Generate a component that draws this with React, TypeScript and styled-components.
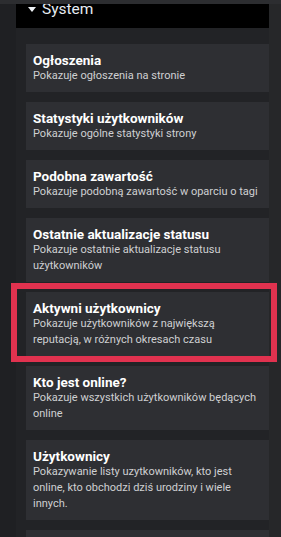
import styled, { createGlobalStyle } from "styled-components";

// TYPES
interface WidgetItem {
  title: string;
  description: string;
  highlighted?: boolean;
}

const widgets: WidgetItem[] = [
  { title: "Ogłoszenia", description: "Pokazuje ogłoszenia na stronie" },
  { title: "Statystyki użytkowników", description: "Pokazuje ogólne statystyki strony" },
  { title: "Podobna zawartość", description: "Pokazuje podobną zawartość w oparciu o tagi" },
  {
    title: "Ostatnie aktualizacje statusu",
    description: "Pokazuje ostatnie aktualizacje statusu użytkowników",
  },
  {
    title: "Aktywni użytkownicy",
    description: "Pokazuje użytkowników z największą reputacją, w różnych okresach czasu",
    highlighted: true,
  },
  { title: "Kto jest online?", description: "Pokazuje wszystkich użytkowników będących online" },
  {
    title: "Użytkownicy",
    description:
      "Pokazywanie listy uzytkowników, kto jest online, kto obchodzi dziś urodziny i wiele innych.",
  },
  { title: "Kalendarz", description: "Pokazuje nadchodzące wydarzenia" },
];

// CSS COMPONENTS
const GlobalCss = createGlobalStyle`
  html, body {
    margin: 0;
    padding: 0;
    height: 537px;
    overflow: hidden;
    background: #222326;
  }
`;

const PageCss = styled.div`
  height: 537px;
  display: flex;
  flex-direction: column;
  overflow: hidden;
  font-family: Roboto, "Liberation Sans", sans-serif;
`;

const TopStripCss = styled.div`
  height: 4px;
  flex: none;
  background: #2c2d30;
`;

const BodyCss = styled.div`
  flex: 1;
  display: flex;
  min-height: 0;
`;

const GutterCss = styled.div`
  width: 16px;
  flex: none;
  background: #1f2023;
`;

const PanelCss = styled.div`
  flex: 1;
  background: #222326;
  display: flex;
  flex-direction: column;
  min-width: 0;
`;

const ScrollTrackCss = styled.div`
  width: 12px;
  flex: none;
  background: #262729;
`;

const SectionHeaderCss = styled.div`
  height: 24px;
  background: #000;
  overflow: hidden;
  padding-left: 12px;
  display: flex;
  align-items: flex-start;
  gap: 6px;
  flex: none;

  span.label {
    font-size: 15.5px;
    line-height: 15px;
    margin-top: -2px;
    color: #e6ecf2;
  }
`;

const CaretCss = styled.i`
  width: 0;
  height: 0;
  margin-top: 3px;
  border-left: 4px solid transparent;
  border-right: 4px solid transparent;
  border-top: 5px solid #eef2f6;
`;

const ListCss = styled.div`
  display: flex;
  flex-direction: column;
  gap: 10px;
  padding: 16px 0 0 10px;
`;

const CardCss = styled.article.withConfig({
  shouldForwardProp: (prop) => prop !== "highlighted",
})<{ highlighted?: boolean }>`
  position: relative;
  background: #2e2f33;
  padding: 8px 8px 8px 7px;
  flex: none;

  h4 {
    margin: 0;
    font-size: 13.5px;
    line-height: 16px;
    font-weight: 700;
    color: #ffffff;
  }

  p {
    margin: 0;
    font-size: 11px;
    line-height: 16px;
    color: #cfd0d2;
  }

  ${(props) =>
    props.highlighted &&
    `
    &::after {
      content: "";
      position: absolute;
      top: -9px;
      right: -8px;
      bottom: -6px;
      left: -15px;
      border: 6px solid #e1324f;
      pointer-events: none;
    }
  `}
`;

export default function App() {
  return (
    <>
      <GlobalCss />
      <PageCss>
        <TopStripCss />
        <BodyCss>
          <GutterCss />
          <PanelCss>
            <SectionHeaderCss>
              <CaretCss />
              <span className="label">System</span>
            </SectionHeaderCss>

            <ListCss>
              {widgets.map((item) => (
                <CardCss key={item.title} highlighted={item.highlighted}>
                  <h4>{item.title}</h4>
                  <p>{item.description}</p>
                </CardCss>
              ))}
            </ListCss>
          </PanelCss>
          <ScrollTrackCss />
        </BodyCss>
      </PageCss>
    </>
  );
}
